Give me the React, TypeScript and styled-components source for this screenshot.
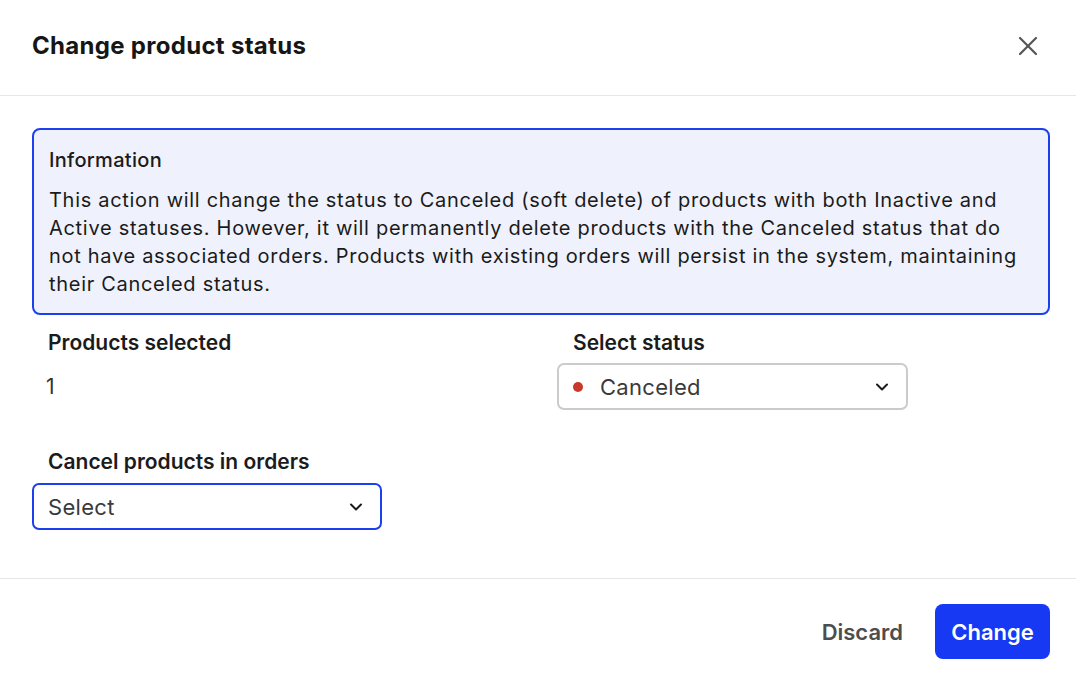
import React from "react";
import styled, { createGlobalStyle } from "styled-components";
import { X, ChevronDown } from "lucide-react";

const Global = createGlobalStyle`
  * { box-sizing: border-box; }
  html, body { margin: 0; padding: 0; background: #fff; }
  body { font-family: Inter, "Noto Sans", sans-serif; color: #1b1b1b; -webkit-font-smoothing: antialiased; }
`;

const Dialog = styled.div`
  width: 1076px;
  height: 678px;
  background: #fff;
  display: flex;
  flex-direction: column;
  overflow: hidden;
`;

const Header = styled.header`
  display: flex;
  align-items: center;
  justify-content: space-between;
  padding: 30px 32px 33px 32px;
  border-bottom: 1px solid #e6e6e6;
`;

const Title = styled.h2`
  margin: 0;
  font-size: 24px;
  line-height: 30px;
  font-weight: 700;
  letter-spacing: 0.3px;
  color: #161616;
`;

const CloseButton = styled.button`
  border: none;
  background: transparent;
  padding: 0;
  display: flex;
  align-items: center;
  justify-content: center;
  color: #555;
  cursor: pointer;
`;

const Body = styled.div`
  padding: 32px 26px 48px 32px;
  display: flex;
  flex-direction: column;
  border-bottom: 1px solid #e6e6e6;
`;

const InfoBox = styled.div`
  border: 2px solid #1d40ee;
  border-radius: 8px;
  background: #eff2fc;
  padding: 16px 26px 15px 15px;
`;

const InfoTitle = styled.div`
  font-size: 20px;
  line-height: 28px;
  font-weight: 500;
  letter-spacing: 0.3px;
  color: #1b1b1b;
`;

const InfoText = styled.p`
  margin: 12px 0 0 0;
  font-size: 20px;
  line-height: 28px;
  font-weight: 400;
  letter-spacing: 0.7px;
  color: #1b1b1b;
`;

const Row = styled.div<{ $top: number }>`
  display: grid;
  grid-template-columns: 525px 1fr;
  margin-top: ${(p) => p.$top}px;
`;

const Field = styled.div`
  display: flex;
  flex-direction: column;
`;

const Label = styled.div`
  font-size: 21px;
  line-height: 28px;
  font-weight: 600;
  color: #1b1b1b;
  padding-left: 16px;
`;

const Value = styled.div`
  font-size: 21px;
  line-height: 47px;
  margin-top: 6px;
  padding-left: 14px;
  color: #333;
`;

const Select = styled.div<{ $focused?: boolean; $width: number; $gap: number }>`
  width: ${(p) => p.$width}px;
  height: 47px;
  margin-top: ${(p) => p.$gap}px;
  border: 2px solid ${(p) => (p.$focused ? "#1d40ee" : "#cbcbcb")};
  border-radius: 7px;
  display: flex;
  align-items: center;
  padding: 0 14px 0 14px;
  gap: 17px;
  font-size: 22px;
  letter-spacing: 0.3px;
  color: #3a3a3a;
  background: #fff;
`;

const Dot = styled.span`
  width: 10px;
  height: 10px;
  border-radius: 50%;
  background: #c8382b;
  flex-shrink: 0;
`;

const SelectText = styled.span`
  flex: 1;
  padding-top: 1px;
`;

const Chevron = styled(ChevronDown)`
  color: #1b1b1b;
  flex-shrink: 0;
`;

const Footer = styled.footer`
  display: flex;
  justify-content: flex-end;
  align-items: center;
  gap: 32px;
  padding: 25px 26px 0 0;
`;

const TextButton = styled.button`
  border: none;
  background: transparent;
  font-family: inherit;
  font-size: 22px;
  font-weight: 600;
  color: #4d4d4d;
  padding: 0;
  cursor: pointer;
`;

const PrimaryButton = styled.button`
  border: none;
  background: #1739f4;
  color: #fff;
  font-family: inherit;
  font-size: 22px;
  font-weight: 600;
  height: 55px;
  width: 115px;
  border-radius: 8px;
  cursor: pointer;
`;

export default function App() {
  return (
    <>
      <Global />
      <Dialog>
        <Header>
          <Title>Change product status</Title>
          <CloseButton aria-label="Close">
            <X size={32} strokeWidth={1.6} />
          </CloseButton>
        </Header>
        <Body>
          <InfoBox>
            <InfoTitle>Information</InfoTitle>
            <InfoText>
              This action will change the status to Canceled (soft delete) of products with both Inactive and
              Active statuses. However, it will permanently delete products with the Canceled status that do
              not have associated orders. Products with existing orders will persist in the system, maintaining
              their Canceled status.
            </InfoText>
          </InfoBox>
          <Row $top={14}>
            <Field>
              <Label>Products selected</Label>
              <Value>1</Value>
            </Field>
            <Field>
              <Label>Select status</Label>
              <Select $width={351} $gap={6}>
                <Dot />
                <SelectText>Canceled</SelectText>
                <Chevron size={20} strokeWidth={2.4} />
              </Select>
            </Field>
          </Row>
          <Row $top={38}>
            <Field>
              <Label>Cancel products in orders</Label>
              <Select $width={350} $gap={7} $focused>
                <SelectText>Select</SelectText>
                <Chevron size={20} strokeWidth={2.4} />
              </Select>
            </Field>
          </Row>
        </Body>
        <Footer>
          <TextButton>Discard</TextButton>
          <PrimaryButton>Change</PrimaryButton>
        </Footer>
      </Dialog>
    </>
  );
}
